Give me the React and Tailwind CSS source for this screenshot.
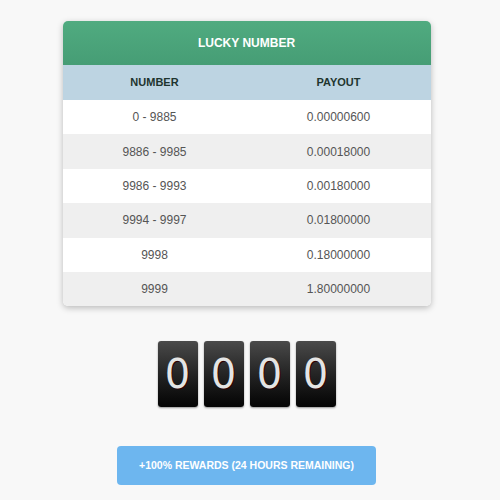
import React from 'react';

const rows = [
  ['0 - 9885', '0.00000600'],
  ['9886 - 9985', '0.00018000'],
  ['9986 - 9993', '0.00180000'],
  ['9994 - 9997', '0.01800000'],
  ['9998', '0.18000000'],
  ['9999', '1.80000000'],
];

export default function App() {
  return (
    <div className="w-[500px] h-[500px] bg-[#f8f8f8]">
      <div
        className="w-[493px] flex flex-col items-center pt-[21px]"
        style={{ fontFamily: '"Liberation Sans", Arial, sans-serif' }}
      >
        <div className="w-[368px] rounded-[5px] overflow-hidden bg-white shadow-[0_2px_6px_rgba(0,0,0,0.25)]">
          <div className="h-[44px] flex items-center justify-center bg-gradient-to-b from-[#50ab80] to-[#469d75] text-white font-bold text-[12px]">
            LUCKY NUMBER
          </div>
          <div className="grid grid-cols-2 h-[35px] items-center bg-[#bdd4e2] text-[#1f352f] font-bold text-[11px] text-center">
            <div>NUMBER</div>
            <div>PAYOUT</div>
          </div>
          {rows.map((r, i) => (
            <div
              key={i}
              className={`grid grid-cols-2 h-[34.4px] items-center text-center text-[12px] text-[#555] ${
                i % 2 ? 'bg-[#efefef]' : 'bg-white'
              }`}
            >
              <div>{r[0]}</div>
              <div>{r[1]}</div>
            </div>
          ))}
        </div>

        <div className="flex gap-[6px] mt-[35px]">
          {[0, 0, 0, 0].map((d, i) => (
            <div
              key={i}
              className="w-[40px] h-[66px] rounded-[3px] bg-gradient-to-b from-[#4a4a4a] to-[#050505] flex items-center justify-center text-[#e4e4e4] text-[40px] leading-none shadow-[0_1px_2px_rgba(0,0,0,0.4)]"
              style={{ fontFamily: '"DejaVu Sans", sans-serif', textShadow: '1px 1px 0 #2a0000' }}
            >
              {d}
            </div>
          ))}
        </div>

        <button className="mt-[39px] w-[259px] h-[39px] rounded-[4px] bg-[#6db6ef] text-white font-bold text-[10.5px]">
          +100% REWARDS (24 HOURS REMAINING)
        </button>
      </div>
    </div>
  );
}
